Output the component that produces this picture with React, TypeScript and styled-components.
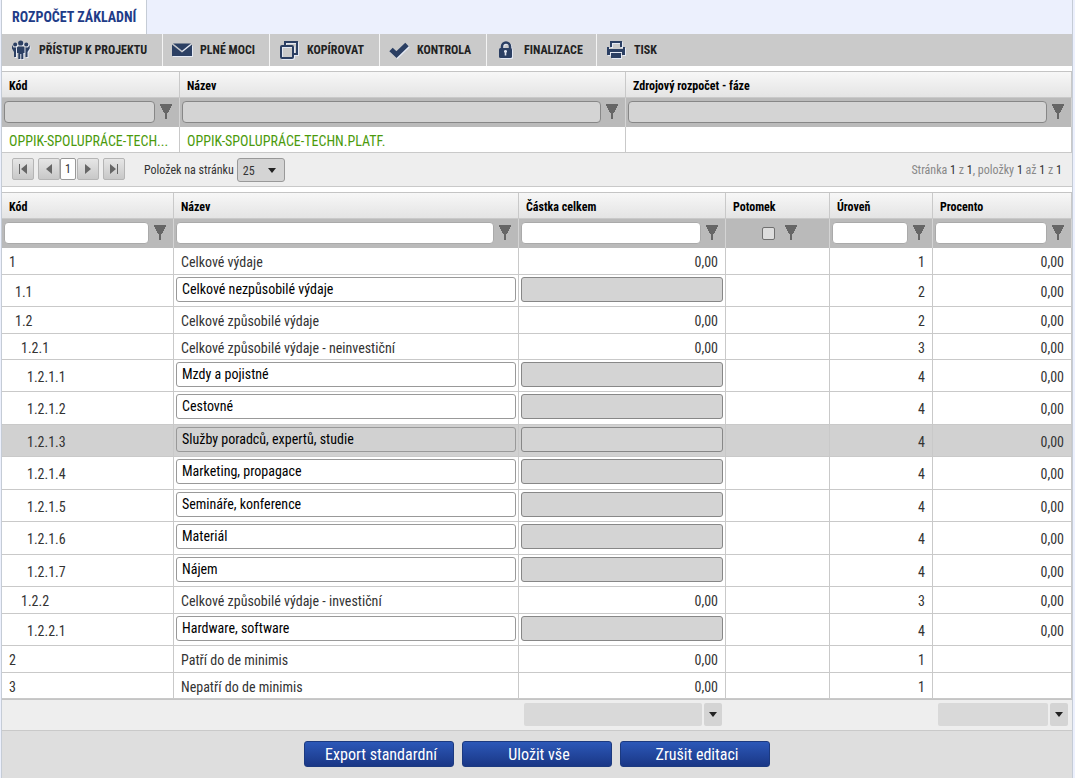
import React from 'react';
import styled, { createGlobalStyle, css } from 'styled-components';

const GlobalStyle = createGlobalStyle`
  * { box-sizing: border-box; }
  html { background: #ecf0fd; }
  body {
    margin: 0;
    font-family: 'Roboto Condensed', 'Liberation Sans Narrow', Roboto, sans-serif;
    font-size: 14px;
    line-height: 20px;
    color: #333;
  }
  input, button, select { font: inherit; margin: 0; }
`;

const Page = styled.div`
  display: flex;
  flex-direction: column;
  min-height: 100vh;
  margin: 0 2px 0 1px;
  border: solid #c5ccd6;
  border-width: 0 1px;
  background: #fff;
`;

const TabStrip = styled.header`
  display: flex;
  height: 34px;
  background: #ecf0fd;
`;

const ActiveTab = styled.h1`
  margin: 0;
  padding: 0 10px;
  border-right: 1px solid #c5ccd6;
  background: #fff;
  color: #1f3c88;
  font-size: 14px;
  font-weight: bold;
  line-height: 34px;
  white-space: nowrap;
`;

const Toolbar = styled.nav`
  display: flex;
  height: 32px;
  margin-bottom: 5px;
  background: #cacaca;
`;

const ToolButton = styled.button<{ $width: number }>`
  display: flex;
  align-items: center;
  gap: 8px;
  width: ${p => p.$width}px;
  padding: 0 0 0 9px;
  border: 0;
  border-right: 1px solid #f4f4f4;
  background: none;
  color: #222;
  font-size: 12px;
  font-weight: bold;
  white-space: nowrap;
  &:last-child { border-right: 0; }
  svg { flex: none; filter: drop-shadow(1px 1px 0 #e4e9f4); }
`;

const Grid = styled.table`
  width: 100%;
  table-layout: fixed;
  border-collapse: separate;
  border-spacing: 0;
  border-top: 1px solid #c4c4c4;
`;

const Col = styled.col<{ $width?: number }>`
  width: ${p => (p.$width ? `${p.$width}px` : 'auto')};
`;

const HeadCell = styled.th`
  height: 26px;
  padding: 2px 7px 0;
  border-right: 1px solid #c9c9c9;
  border-bottom: 1px solid #c9c9c9;
  background: linear-gradient(#f7f7f7, #e4e4e4);
  color: #000;
  font-size: 12px;
  text-align: left;
  white-space: nowrap;
`;

const FilterCell = styled.td`
  height: 29px;
  padding: 0 7px 1px 2px;
  border-right: 1px solid #d4d4d4;
  background: #bababa;
`;

const FilterBox = styled.div<{ $center?: boolean }>`
  display: flex;
  align-items: center;
  justify-content: ${p => (p.$center ? 'center' : 'flex-start')};
  gap: ${p => (p.$center ? 10 : 5)}px;
  padding-left: ${p => (p.$center ? 8 : 0)}px;
`;

const FilterInput = styled.input`
  flex: 1;
  min-width: 0;
  height: 22px;
  padding: 0 5px;
  border: 1px solid #aaa;
  border-radius: 4px;
  background: #fff;
  &:disabled { border-color: #878787; background: #d4d4d4; }
`;

const FilterButton = styled.button`
  display: block;
  width: 12px;
  height: 16px;
  padding: 0;
  border: 0;
  background: none;
  svg { display: block; }
`;

const Check = styled.input`
  appearance: none;
  width: 13px;
  height: 13px;
  border: 1px solid #707070;
  border-radius: 2px;
  background: #ddd;
`;

const Cell = styled.td<{ $align?: 'right'; $level?: number }>`
  padding: 2px 7px 0 ${p => 1 + 6 * (p.$level ?? 1)}px;
  border-right: 1px solid #c9c9c9;
  border-bottom: 1px solid #c9c9c9;
  text-align: ${p => p.$align ?? 'left'};
  overflow: hidden;
  white-space: nowrap;
`;

const SourceLink = styled.a`
  color: #4b9a0b;
  text-decoration: none;
`;

const EditCell = styled.td`
  padding: 2px;
  border-right: 1px solid #c9c9c9;
  border-bottom: 1px solid #c9c9c9;
  vertical-align: top;
`;

const EditInput = styled.input`
  display: block;
  width: 100%;
  height: 25px;
  padding: 0 5px 2px;
  border: 1px solid #999;
  border-radius: 3px;
  background: transparent;
  color: #000;
  &:disabled { border-color: #878787; background: #d4d4d4; }
`;

const PlainRow = styled.tr`
  height: 27px;
  &:nth-child(11n + 4) { height: 26px; }
`;

const EditableRow = styled.tr<{ $selected?: boolean }>`
  height: 32px;
  &:nth-child(2n + 6) { height: 33px; }
  ${p => p.$selected && css`background: #d1d1d1;`}
`;

const SourceRow = styled.tr`
  height: 26px;
`;

const Pager = styled.div`
  display: flex;
  align-items: flex-start;
  height: 34px;
  margin-bottom: 5px;
  padding: 5px 10px 0;
  border-bottom: 1px solid #c9c9c9;
  background: #eee;
  font-size: 12px;
  line-height: 24px;
`;

const PagerGroup = styled.div`
  display: flex;
  gap: 4px;
`;

const PagerButton = styled.button`
  display: flex;
  align-items: center;
  justify-content: center;
  width: 22px;
  height: 22px;
  padding: 0;
  border: 1px solid #b5b5b5;
  border-radius: 2px;
  background: linear-gradient(#e6e6e6, #c8c8c8);
`;

const PageNumber = styled.button`
  width: 16px;
  height: 22px;
  margin: 0 1px 0 0;
  padding: 0;
  border: 1px solid #999;
  border-radius: 2px;
  background: #fff;
  color: #333;
  line-height: 20px;
`;

const PageSizeLabel = styled.label`
  margin-left: 19px;
`;

const SelectWrap = styled.span`
  display: grid;
  align-items: center;
  width: 48px;
  margin-left: 3px;
  > * { grid-area: 1 / 1; }
  svg { justify-self: end; margin-right: 9px; pointer-events: none; }
`;

const PageSize = styled.select`
  appearance: none;
  width: 100%;
  height: 24px;
  padding: 0 5px;
  border: 1px solid #999;
  border-radius: 3px;
  background: #d4d4d4;
  color: #333;
`;

const PagerInfo = styled.span`
  margin-left: auto;
  color: #888;
  b { color: #333; font-weight: normal; }
`;

const FootCell = styled.td`
  height: 32px;
  padding: 0 0 2px;
  border-top: 1px solid #c4c4c4;
  border-bottom: 1px solid #c9c9c9;
  background: #eee;
`;

const Combo = styled.div`
  display: flex;
  gap: 2px;
  height: 23px;
  padding: 0 4px 0 5px;
`;

const ComboInput = styled.input`
  flex: 1;
  min-width: 0;
  padding: 0 5px;
  border: 0;
  border-radius: 2px;
  background: #d9d9d9;
`;

const ComboButton = styled.button`
  display: flex;
  align-items: center;
  justify-content: center;
  width: 18px;
  padding: 0;
  border: 0;
  border-radius: 2px;
  background: #d4d4d4;
`;

const Actions = styled.footer`
  display: flex;
  flex: 1;
  align-items: flex-start;
  justify-content: center;
  gap: 8px;
  padding: 10px 0 0 0;
  background: #dedede;
`;

const ActionButton = styled.button`
  width: 150px;
  height: 26px;
  padding: 2px 0 0 4px;
  border: 1px solid #1c3a80;
  border-radius: 3px;
  background: linear-gradient(#2c58b8, #1a3786);
  color: #fff;
  font-size: 16px;
  line-height: 22px;
`;

const Funnel = ({ label }: { label: string }) => (
  <FilterButton type="button" aria-label={`Filtrovat: ${label}`}>
    <svg width="12" height="16" viewBox="0 0 12 16" fill="#666" shapeRendering="crispEdges">
      <path d="M0 0h12v2h-1v2h-1v2H9v2H8v1H7v6H5V9H4V8H3V6H2V4H1V2H0z" />
    </svg>
  </FilterButton>
);

const Caret = () => (
  <svg width="8" height="5" viewBox="0 0 8 5" fill="#222"><path d="M0 0h8L4 5z" /></svg>
);

const ink = '#2b3f63';

const PeopleIcon = () => (
  <svg width="20" height="20" viewBox="0 0 20 20" fill={ink}>
    <circle cx="9.700" cy="3" r="2.600" />
    <circle cx="4.200" cy="4.500" r="2" />
    <circle cx="15.300" cy="4.500" r="2" />
    <path d="M7 6.500h5.500l1 1V13h-1.200v6h-2V14H9.300v5h-2v-6H6V7.500z" />
    <path d="M1 5l1.500 2.500H5V17H3v-5L1 8.500zM18.700 5L17 7.500h-2.500V17h2v-5l2.200-3.500z" />
  </svg>
);

const MailIcon = () => (
  <svg width="20" height="20" viewBox="0 0 20 20" fill={ink}>
    <path d="M1 3.500h18l-9 7.200z" />
    <path d="M0 4.500l10 8 10-8V16H0z" />
  </svg>
);

const CopyIcon = () => (
  <svg width="20" height="20" viewBox="0 0 20 20" fill="none" stroke={ink} strokeWidth="2">
    <rect x="2" y="6" width="12" height="12" rx="1" />
    <path d="M6 5V2h12v12h-3" />
  </svg>
);

const CheckIcon = () => (
  <svg width="20" height="20" viewBox="0 0 20 20" fill="none" stroke={ink} strokeWidth="5">
    <path d="M2 9.500l5.500 5L18 4.500" />
  </svg>
);

const LockIcon = () => (
  <svg width="20" height="20" viewBox="0 0 20 20">
    <path d="M6 10V6.500a4 4 0 018 0V10" fill="none" stroke={ink} strokeWidth="2.500" />
    <rect x="3" y="8" width="13" height="10" rx="1.500" fill={ink} />
    <path d="M9.500 10a1.500 1.500 0 01.8 2.800V15.500H8.700v-2.700A1.500 1.500 0 019.500 10z" fill="#dfe4ee" />
  </svg>
);

const PrintIcon = () => (
  <svg width="20" height="20" viewBox="0 0 20 20" fill={ink}>
    <path d="M4 1h12v6h-2V3H6v4H4z" />
    <path d="M1 7h2v2h14V7h2v8h-3v-3H4v3H1z" />
    <path d="M5 13h10v5H5z" />
  </svg>
);

const tools = [
  { label: 'PŘÍSTUP K PROJEKTU', width: 161, Icon: PeopleIcon },
  { label: 'PLNÉ MOCI', width: 107, Icon: MailIcon },
  { label: 'KOPÍROVAT', width: 110, Icon: CopyIcon },
  { label: 'KONTROLA', width: 107, Icon: CheckIcon },
  { label: 'FINALIZACE', width: 110, Icon: LockIcon },
  { label: 'TISK', width: 110, Icon: PrintIcon },
];

const sourceColumns = [
  { title: 'Kód', width: 178 },
  { title: 'Název' },
  { title: 'Zdrojový rozpočet - fáze' },
];

const budgetColumns = [
  { title: 'Kód', width: 172 },
  { title: 'Název' },
  { title: 'Částka celkem', width: 207 },
  { title: 'Potomek', width: 104 },
  { title: 'Úroveň', width: 103 },
  { title: 'Procento', width: 139 },
];

type Item = { code: string; name: string; level: number; editable?: boolean; selected?: boolean; percent?: string };

const items: Item[] = [
  { code: '1', name: 'Celkové výdaje', level: 1, percent: '0,00' },
  { code: '1.1', name: 'Celkové nezpůsobilé výdaje', level: 2, editable: true, percent: '0,00' },
  { code: '1.2', name: 'Celkové způsobilé výdaje', level: 2, percent: '0,00' },
  { code: '1.2.1', name: 'Celkové způsobilé výdaje - neinvestiční', level: 3, percent: '0,00' },
  { code: '1.2.1.1', name: 'Mzdy a pojistné', level: 4, editable: true, percent: '0,00' },
  { code: '1.2.1.2', name: 'Cestovné', level: 4, editable: true, percent: '0,00' },
  { code: '1.2.1.3', name: 'Služby poradců, expertů, studie', level: 4, editable: true, selected: true, percent: '0,00' },
  { code: '1.2.1.4', name: 'Marketing, propagace', level: 4, editable: true, percent: '0,00' },
  { code: '1.2.1.5', name: 'Semináře, konference', level: 4, editable: true, percent: '0,00' },
  { code: '1.2.1.6', name: 'Materiál', level: 4, editable: true, percent: '0,00' },
  { code: '1.2.1.7', name: 'Nájem', level: 4, editable: true, percent: '0,00' },
  { code: '1.2.2', name: 'Celkové způsobilé výdaje - investiční', level: 3, percent: '0,00' },
  { code: '1.2.2.1', name: 'Hardware, software', level: 4, editable: true, percent: '0,00' },
  { code: '2', name: 'Patří do de minimis', level: 1 },
  { code: '3', name: 'Nepatří do de minimis', level: 1 },
];

const PagerIcon = ({ d }: { d: string }) => (
  <svg width="10" height="10" viewBox="0 0 10 10" fill="#666"><path d={d} /></svg>
);

const TotalCombo = ({ label }: { label: string }) => (
  <Combo>
    <ComboInput aria-label={label} disabled />
    <ComboButton type="button" aria-label={`Vybrat: ${label}`}><Caret /></ComboButton>
  </Combo>
);

const SourceGrid = () => (
  <Grid>
    <colgroup>{sourceColumns.map(c => <Col key={c.title} $width={c.width} />)}</colgroup>
    <thead>
      <tr>{sourceColumns.map(c => <HeadCell key={c.title} scope="col">{c.title}</HeadCell>)}</tr>
      <tr>
        {sourceColumns.map(c => (
          <FilterCell key={c.title}>
            <FilterBox>
              <FilterInput aria-label={c.title} disabled />
              <Funnel label={c.title} />
            </FilterBox>
          </FilterCell>
        ))}
      </tr>
    </thead>
    <tbody>
      <SourceRow>
        <Cell><SourceLink href="#zdroj">OPPIK-SPOLUPRÁCE-TECH...</SourceLink></Cell>
        <Cell><SourceLink href="#zdroj">OPPIK-SPOLUPRÁCE-TECHN.PLATF.</SourceLink></Cell>
        <Cell />
      </SourceRow>
    </tbody>
  </Grid>
);

const BudgetRow = ({ item }: { item: Item }) => {
  const rest = (
    <>
      <Cell />
      <Cell $align="right">{item.level}</Cell>
      <Cell $align="right">{item.percent}</Cell>
    </>
  );
  return item.editable ? (
    <EditableRow $selected={item.selected}>
      <Cell $level={item.level}>{item.code}</Cell>
      <EditCell><EditInput aria-label={`Název ${item.code}`} defaultValue={item.name} /></EditCell>
      <EditCell><EditInput aria-label={`Částka ${item.code}`} disabled /></EditCell>
      {rest}
    </EditableRow>
  ) : (
    <PlainRow>
      <Cell $level={item.level}>{item.code}</Cell>
      <Cell>{item.name}</Cell>
      <Cell $align="right">0,00</Cell>
      {rest}
    </PlainRow>
  );
};

const BudgetGrid = () => (
  <Grid>
    <colgroup>{budgetColumns.map(c => <Col key={c.title} $width={c.width} />)}</colgroup>
    <thead>
      <tr>{budgetColumns.map(c => <HeadCell key={c.title} scope="col">{c.title}</HeadCell>)}</tr>
      <tr>
        {budgetColumns.map(c => (
          <FilterCell key={c.title}>
            <FilterBox $center={c.title === 'Potomek'}>
              {c.title === 'Potomek'
                ? <Check type="checkbox" aria-label={c.title} />
                : <FilterInput aria-label={c.title} />}
              <Funnel label={c.title} />
            </FilterBox>
          </FilterCell>
        ))}
      </tr>
    </thead>
    <tbody>{items.map(item => <BudgetRow key={item.code} item={item} />)}</tbody>
    <tfoot>
      <tr>
        <FootCell colSpan={2} />
        <FootCell><TotalCombo label="Částka celkem" /></FootCell>
        <FootCell colSpan={2} />
        <FootCell><TotalCombo label="Procento" /></FootCell>
      </tr>
    </tfoot>
  </Grid>
);

export default function App() {
  return (
    <>
      <GlobalStyle />
      <Page>
        <TabStrip><ActiveTab>ROZPOČET ZÁKLADNÍ</ActiveTab></TabStrip>
        <Toolbar>
          {tools.map(({ label, width, Icon }) => (
            <ToolButton key={label} type="button" $width={width}><Icon />{label}</ToolButton>
          ))}
        </Toolbar>
        <SourceGrid />
        <Pager>
          <PagerGroup>
            <PagerButton type="button" aria-label="První"><PagerIcon d="M1 0h1v10H1zM9 0v10L3 5z" /></PagerButton>
            <PagerButton type="button" aria-label="Předchozí"><PagerIcon d="M8 0v10L2 5z" /></PagerButton>
          </PagerGroup>
          <PageNumber type="button">1</PageNumber>
          <PagerGroup>
            <PagerButton type="button" aria-label="Další"><PagerIcon d="M2 0v10l6-5z" /></PagerButton>
            <PagerButton type="button" aria-label="Poslední"><PagerIcon d="M8 0h1v10H8zM1 0v10l6-5z" /></PagerButton>
          </PagerGroup>
          <PageSizeLabel htmlFor="page-size">Položek na stránku</PageSizeLabel>
          <SelectWrap>
            <PageSize id="page-size" defaultValue="25"><option>25</option><option>50</option></PageSize>
            <Caret />
          </SelectWrap>
          <PagerInfo>Stránka <b>1</b> z <b>1</b>, položky <b>1</b> až <b>1</b> z <b>1</b></PagerInfo>
        </Pager>
        <BudgetGrid />
        <Actions>
          <ActionButton type="button">Export standardní</ActionButton>
          <ActionButton type="button">Uložit vše</ActionButton>
          <ActionButton type="button">Zrušit editaci</ActionButton>
        </Actions>
      </Page>
    </>
  );
}
